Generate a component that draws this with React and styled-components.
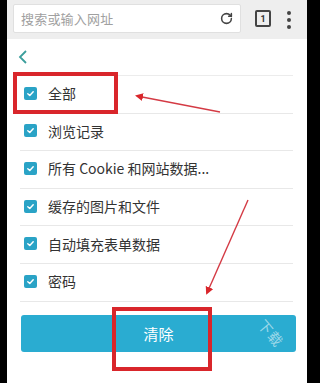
import React from "react";
import styled, { createGlobalStyle } from "styled-components";
import { RotateCw } from "lucide-react";

const GlobalStyle = createGlobalStyle`
  html, body {
    margin: 0;
    padding: 0;
    background: #000;
  }
  * {
    box-sizing: border-box;
  }
`;

const Screen = styled.div`
  position: relative;
  width: 300px;
  height: 383px;
  margin-left: 7px;
  background: #fff;
  overflow: hidden;
  font-family: "Noto Sans CJK SC", "Noto Sans", sans-serif;
`;

const TopBar = styled.div`
  height: 39px;
  background: #eeeeee;
  display: flex;
  align-items: flex-start;
  padding: 4px 0 0 6px;
`;

const SearchBox = styled.div`
  width: 228px;
  height: 29px;
  background: #fff;
  border: 1px solid #e0e0e0;
  border-radius: 2px;
  display: flex;
  align-items: center;
  justify-content: space-between;
  padding: 0 7px 0 7px;
`;

const Placeholder = styled.span`
  font-size: 13px;
  color: #a0a0a0;
  letter-spacing: 0.2px;
`;

const TabCount = styled.div`
  margin: 6px 0 0 14px;
  width: 16px;
  height: 17px;
  border: 2px solid #444;
  border-radius: 2px;
  display: flex;
  align-items: center;
  justify-content: center;
  font-family: "Roboto", sans-serif;
  font-size: 9px;
  font-weight: 700;
  color: #333;
`;

const Dots = styled.div`
  margin: 7px 0 0 16px;
  display: flex;
  flex-direction: column;
  gap: 3px;
  span {
    width: 4px;
    height: 4px;
    border-radius: 50%;
    background: #444;
  }
`;

const BackRow = styled.div`
  height: 36px;
  display: flex;
  align-items: center;
  padding-left: 11px;
`;

const List = styled.div`
  margin: 0 14px 0 13px;
  border-top: 1px solid #ececec;
`;

const Row = styled.div`
  height: 37.6px;
  display: flex;
  align-items: center;
  padding-left: 4px;
  padding-bottom: 2px;
  border-bottom: 1px solid #e8e8e8;
`;

const Check = styled.span`
  width: 13px;
  height: 13px;
  border-radius: 2px;
  background: #2aa3c6;
  display: flex;
  align-items: center;
  justify-content: center;
  flex-shrink: 0;
`;

const Label = styled.span`
  margin-left: 11px;
  font-size: 14px;
  color: #333;
`;

const ClearButton = styled.button`
  display: flex;
  align-items: center;
  justify-content: center;
  margin: 13px 0 0 14px;
  width: 275px;
  height: 37px;
  border: none;
  border-radius: 3px;
  background: #2aacd1;
  color: #fff;
  font-family: inherit;
  font-size: 15px;
  position: relative;
  overflow: hidden;
`;

const Watermark = styled.span`
  position: absolute;
  right: 10px;
  top: 11px;
  transform: rotate(50deg);
  font-size: 14px;
  line-height: 14px;
  color: rgba(255, 255, 255, 0.55);
  letter-spacing: 1px;
`;

const Highlight = styled.div`
  position: absolute;
  left: ${(p) => p.x}px;
  top: ${(p) => p.y}px;
  width: ${(p) => p.w}px;
  height: ${(p) => p.h}px;
  border: 4px solid #d9262b;
  pointer-events: none;
`;

const Arrows = styled.svg`
  position: absolute;
  left: 0;
  top: 0;
  pointer-events: none;
`;

const items = [
  "全部",
  "浏览记录",
  "所有 Cookie 和网站数据...",
  "缓存的图片和文件",
  "自动填充表单数据",
  "密码",
];

function CheckMark() {
  return (
    <svg width="9" height="9" viewBox="0 0 10 10">
      <path d="M2 5.2 L4.2 7.2 L8 3" fill="none" stroke="#fff" strokeWidth="1.6" strokeLinecap="round" strokeLinejoin="round" />
    </svg>
  );
}

export default function App() {
  return (
    <>
      <GlobalStyle />
      <Screen>
        <TopBar>
          <SearchBox>
            <Placeholder>搜索或输入网址</Placeholder>
            <RotateCw size={13} color="#444" strokeWidth={2.8} />
          </SearchBox>
          <TabCount>1</TabCount>
          <Dots>
            <span />
            <span />
            <span />
          </Dots>
        </TopBar>

        <BackRow>
          <svg width="10" height="14" viewBox="0 0 10 14">
            <path d="M8 1 L2 7 L8 13" fill="none" stroke="#3b9e9c" strokeWidth="1.8" />
          </svg>
        </BackRow>

        <List>
          {items.map((t) => (
            <Row key={t}>
              <Check>
                <CheckMark />
              </Check>
              <Label>{t}</Label>
            </Row>
          ))}
        </List>

        <ClearButton>
          清除
          <Watermark>下载</Watermark>
        </ClearButton>

        <Highlight x={6} y={72} w={105} h={42} />
        <Highlight x={105} y={307} w={100} h={64} />

        <Arrows width="300" height="383" viewBox="0 0 300 383">
          <defs>
            <marker id="head" markerWidth="8" markerHeight="8" refX="6" refY="4" orient="auto" markerUnits="userSpaceOnUse">
              <path d="M0 0 L8 4 L0 8 Z" fill="#d9262b" />
            </marker>
          </defs>
          <line x1="213" y1="112" x2="130" y2="96" stroke="#d43a44" strokeWidth="1.4" markerEnd="url(#head)" />
          <line x1="241" y1="200" x2="200" y2="293" stroke="#d43a44" strokeWidth="1.4" markerEnd="url(#head)" />
        </Arrows>
      </Screen>
    </>
  );
}
